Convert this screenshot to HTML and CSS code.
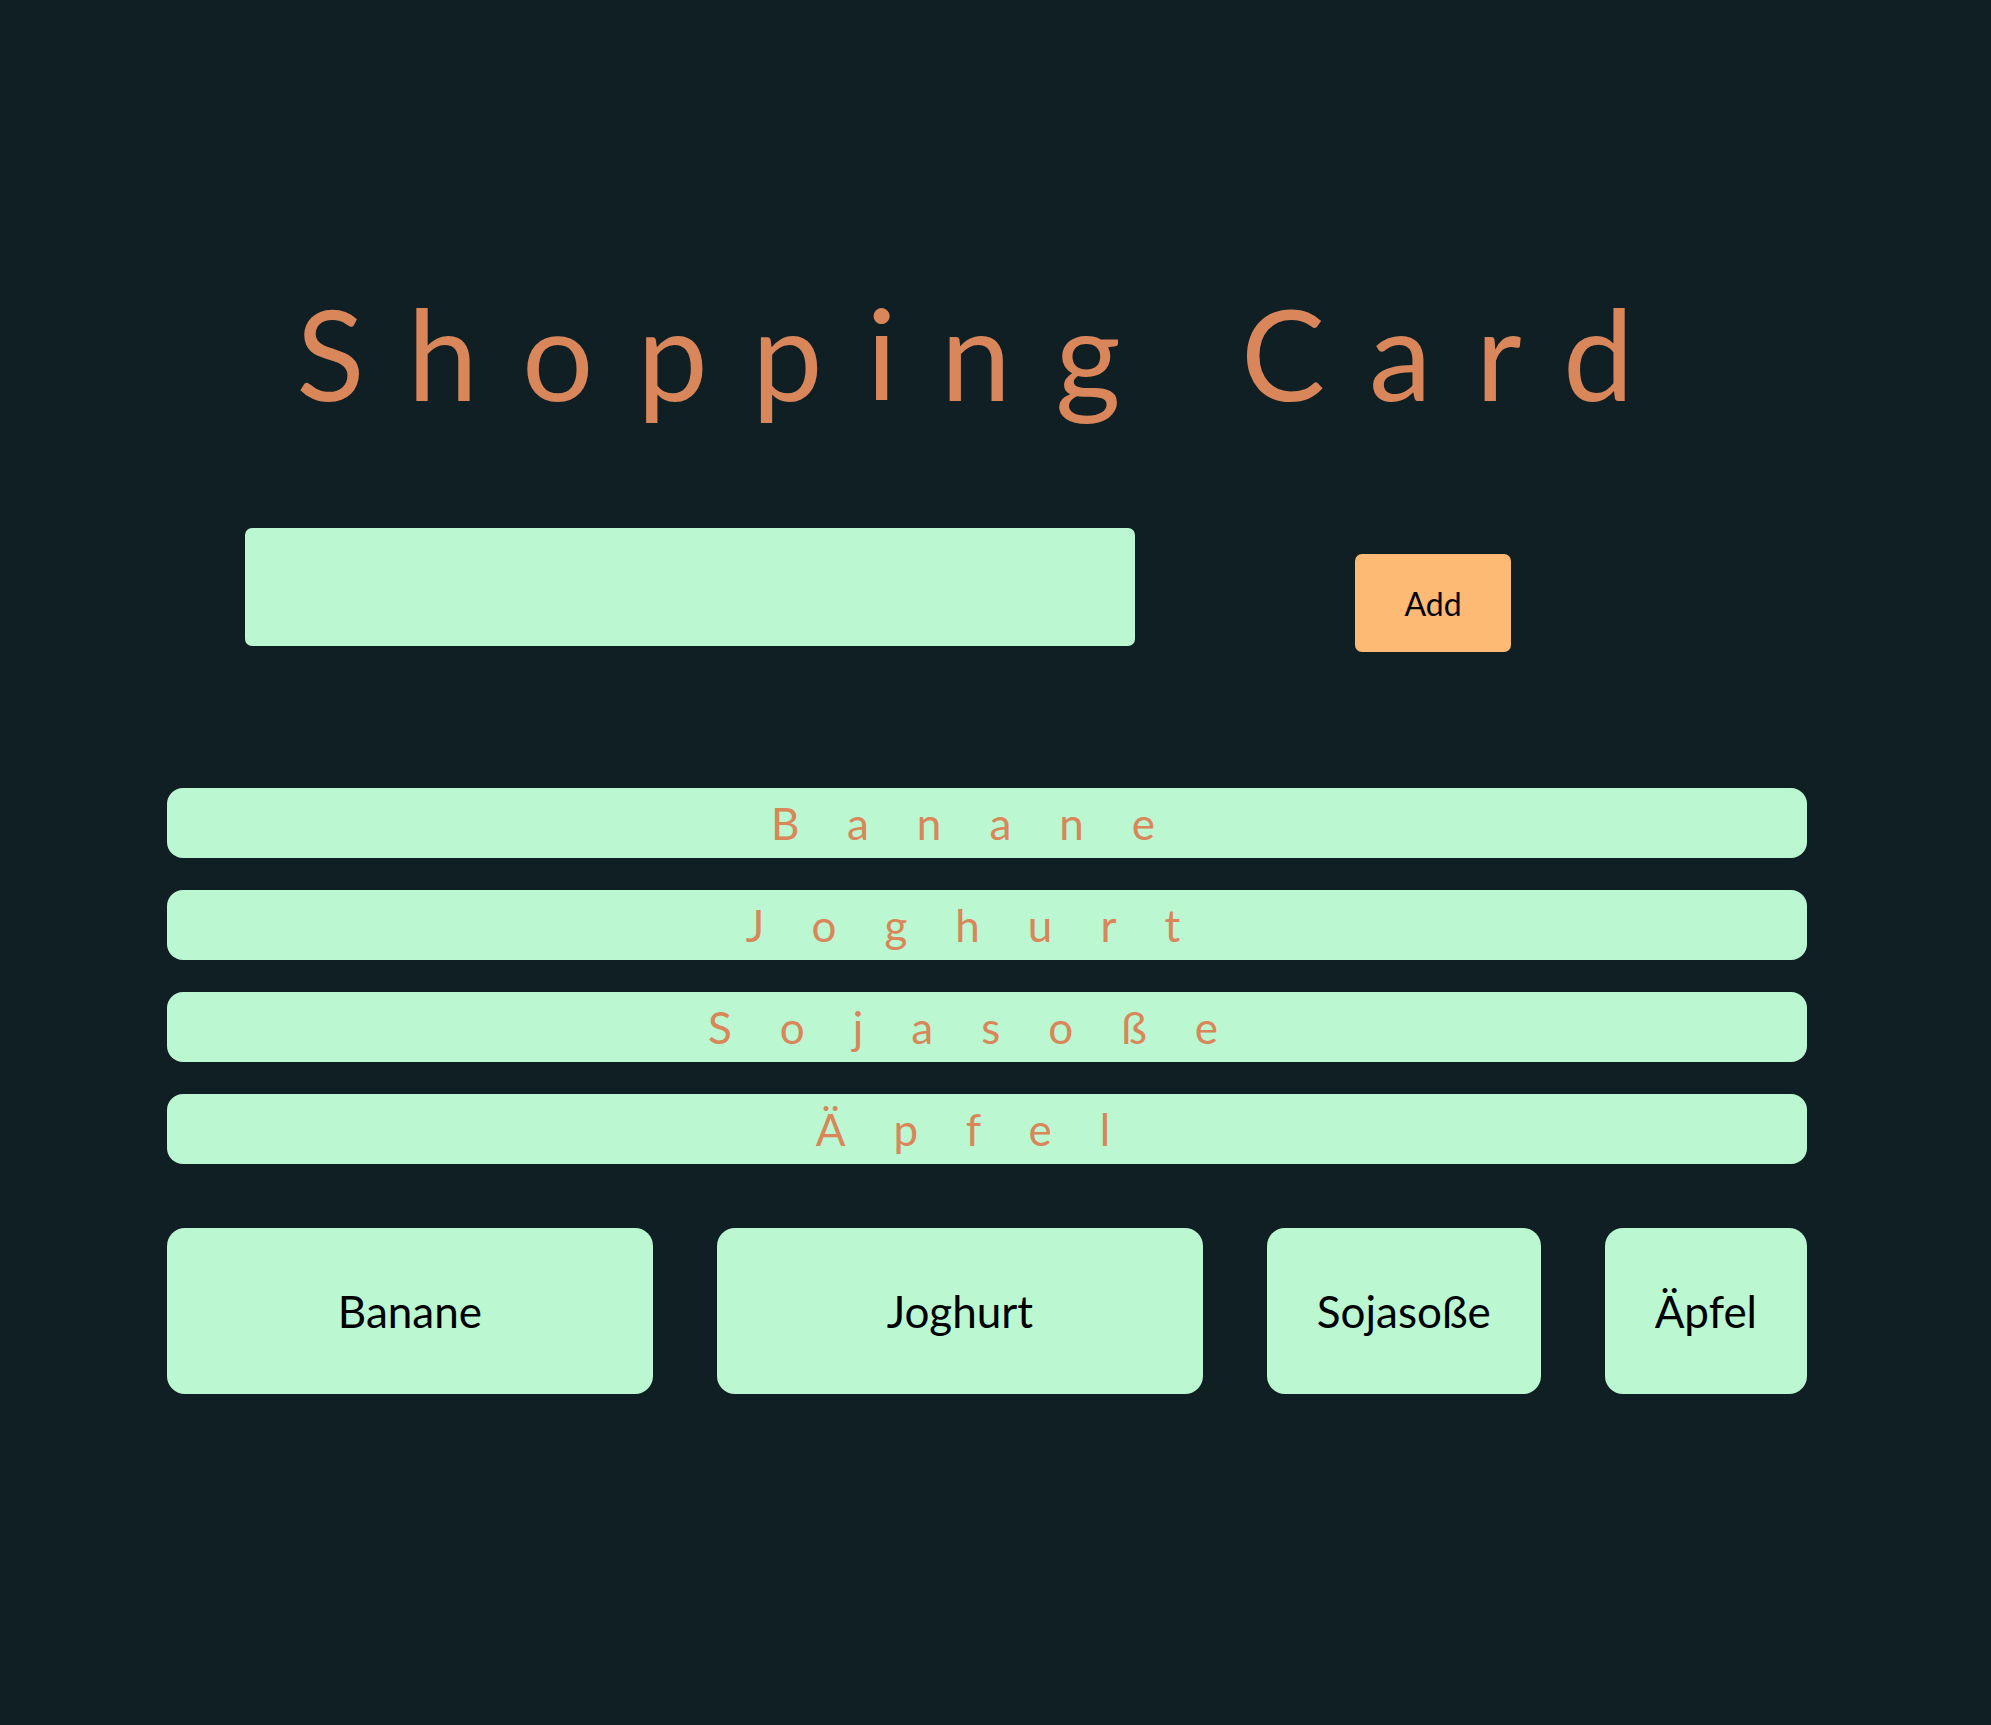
FILE: index.html
```html
<!DOCTYPE html>
<html lang="de">
<head>
<meta charset="utf-8">
<title>Shopping Card</title>
<link rel="stylesheet" href="styles.css">
</head>
<body>
<main class="app">
  <h1 class="title">Shopping Card</h1>
  <form class="add-form" onsubmit="return false">
    <input class="add-input" type="text" aria-label="Artikel">
    <button class="add-button" type="submit">Add</button>
  </form>
  <ul class="list">
    <li class="list-item">Banane</li>
    <li class="list-item">Joghurt</li>
    <li class="list-item">Sojasoße</li>
    <li class="list-item">Äpfel</li>
  </ul>
  <div class="chips">
    <button class="chip" type="button">Banane</button>
    <button class="chip" type="button">Joghurt</button>
    <button class="chip" type="button">Sojasoße</button>
    <button class="chip" type="button">Äpfel</button>
  </div>
</main>
</body>
</html>
```
FILE: styles.css
```css
html, body {
  margin: 0;
  background: #0f1f24;
}
body {
  padding: 0 17px 0 0;
  min-height: 1725px;
  box-sizing: border-box;
  font-family: "Lato", "Open Sans", sans-serif;
}
.app {
  width: 1640px;
  margin: 0 auto;
  padding-top: 278px;
}
.title {
  margin: 0;
  text-align: center;
  color: #d9865a;
  font-weight: 400;
  font-size: 126px;
  line-height: 150px;
  letter-spacing: 44px;
}
.add-form {
  display: flex;
  align-items: flex-start;
  gap: 220px;
  margin: 100px 0 0 78px;
}
.add-input {
  width: 890px;
  height: 118px;
  box-sizing: border-box;
  border: none;
  border-radius: 7px;
  background: #bbf7d0;
  padding: 0 20px;
  font: inherit;
  font-size: 32px;
  outline: none;
}
.add-button {
  margin-top: 26px;
  width: 156px;
  height: 98px;
  border: none;
  border-radius: 7px;
  background: #fdba74;
  color: #000;
  font-family: inherit;
  font-size: 32px;
  padding: 0;
}
.list {
  list-style: none;
  margin: 136px 0 0;
  padding: 0;
  display: flex;
  flex-direction: column;
  gap: 32px;
}
.list-item {
  height: 70px;
  border-radius: 16px;
  background: #bbf7d0;
  color: #d9865a;
  font-size: 44px;
  line-height: 70px;
  text-align: center;
  letter-spacing: 48px;
}
.chips {
  display: grid;
  grid-template-columns: 1fr 1fr auto auto;
  gap: 64px;
  margin-top: 64px;
}
.chip {
  height: 166px;
  border: none;
  border-radius: 18px;
  background: #bbf7d0;
  color: #000;
  font-family: inherit;
  font-size: 44px;
  padding: 0 50px;
}
```
